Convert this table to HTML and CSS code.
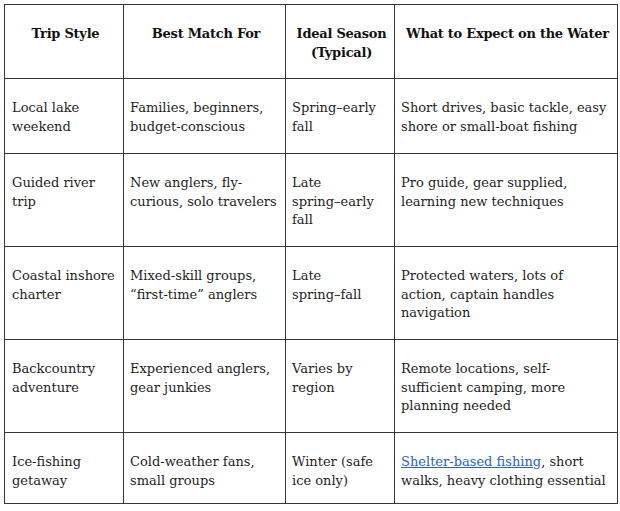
FILE: index.html
```html
<!DOCTYPE html>
<html>
<head>
<meta charset="utf-8">
<link rel="stylesheet" href="styles.css">
</head>
<body>
<table class="trips">
  <colgroup>
    <col class="c1"><col class="c2"><col class="c3"><col class="c4">
  </colgroup>
  <thead>
    <tr>
      <th>Trip Style</th>
      <th>Best Match For</th>
      <th>Ideal Season (Typical)</th>
      <th class="last">What to Expect on the Water</th>
    </tr>
  </thead>
  <tbody>
    <tr class="r1">
      <td>Local lake weekend</td>
      <td>Families, beginners, budget-conscious</td>
      <td><span class="nw">Spring–early</span> fall</td>
      <td class="last">Short drives, basic tackle, easy shore or small-boat fishing</td>
    </tr>
    <tr class="r3">
      <td>Guided river trip</td>
      <td>New anglers, fly-curious, solo travelers</td>
      <td>Late <span class="nw">spring–early</span> fall</td>
      <td class="last">Pro guide, gear supplied, learning new techniques</td>
    </tr>
    <tr class="r3">
      <td>Coastal inshore charter</td>
      <td>Mixed-skill groups, “first-time” anglers</td>
      <td>Late <span class="nw">spring–fall</span></td>
      <td class="last">Protected waters, lots of action, captain handles navigation</td>
    </tr>
    <tr class="r3">
      <td>Backcountry adventure</td>
      <td>Experienced anglers, gear junkies</td>
      <td>Varies by region</td>
      <td class="last">Remote locations, self-sufficient camping, more planning needed</td>
    </tr>
    <tr class="r5">
      <td>Ice-fishing getaway</td>
      <td>Cold-weather fans, small groups</td>
      <td>Winter (safe ice only)</td>
      <td class="last"><a class="link" href="#">Shelter-based fishing</a>, short walks, heavy clothing essential</td>
    </tr>
  </tbody>
</table>
</body>
</html>
```

FILE: styles.css
```css
html, body {
  margin: 0;
  background: #ffffff;
}
body {
  padding: 4px;
  font-family: "DejaVu Serif", "Liberation Serif", serif;
  font-size: 13px;
  line-height: 18.5px;
  color: #1e1e1e;
}
.trips {
  border-collapse: collapse;
  table-layout: fixed;
  width: 613px;
}
.c1 { width: 119px; }
.c2 { width: 162px; }
.c3 { width: 109px; }
.c4 { width: 223px; }
.trips th,
.trips td {
  border: 1px solid #363636;
  vertical-align: top;
  padding: 20px 4px 0 7px;
  text-align: left;
}
.trips td + td {
  padding-left: 6px;
}
.trips td.last {
  padding-right: 9px;
}
.trips th {
  text-align: center;
  font-weight: bold;
  color: #111;
  letter-spacing: -0.25px;
  height: 53px;
}
.trips th.last {
  padding-right: 4px;
}
.r1 td { height: 54px; }
.r3 td { height: 72px; }
.r5 td { height: 50px; }
.nw {
  white-space: nowrap;
}
.link {
  color: #2a5fc4;
  text-decoration: underline;
}
```
